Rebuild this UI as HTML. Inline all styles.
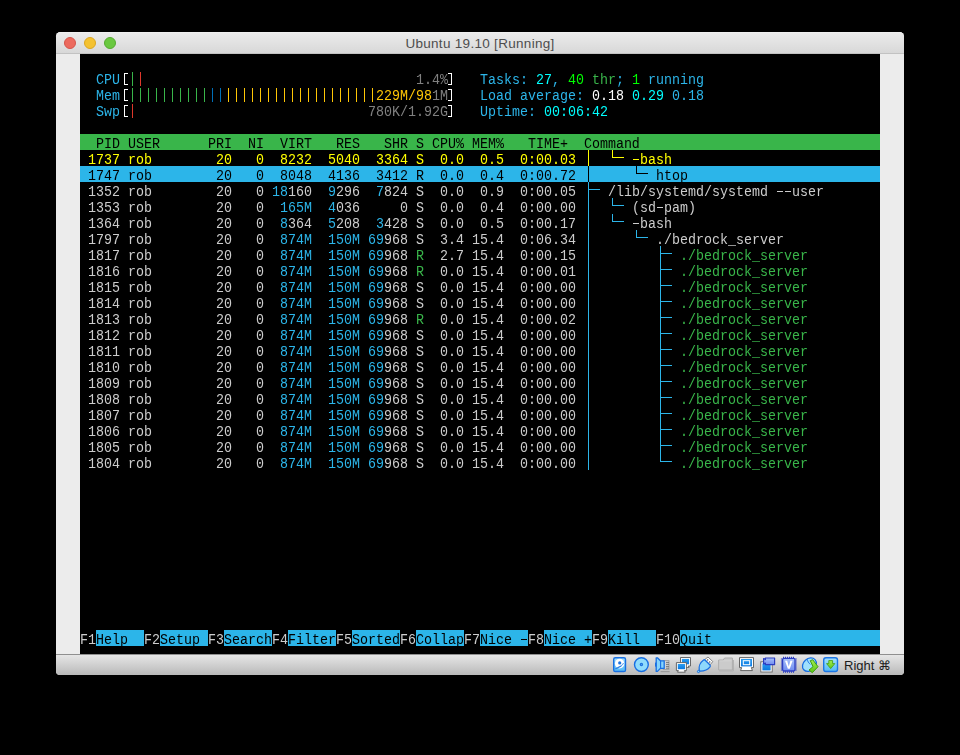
<!DOCTYPE html>
<html><head><meta charset="utf-8"><title>Ubuntu 19.10 [Running]</title>
<style>
html,body{margin:0;padding:0;background:#000;}
body{width:960px;height:755px;position:relative;overflow:hidden;font-family:"Liberation Sans",sans-serif;}
#win{position:absolute;left:56px;top:32px;width:848px;height:643px;border-radius:4.5px 4.5px 4px 4px;overflow:hidden;background:#ececec;}
#tb{position:absolute;left:0;top:0;width:848px;height:22px;background:linear-gradient(#f4f4f4 0,#ebebeb 1px,#d8d8d8 100%);border-bottom:1px solid #c2c2c2;box-sizing:border-box;}
#tb .ttl{position:absolute;left:0;width:848px;top:0.5px;line-height:22px;text-align:center;font-size:13.5px;letter-spacing:0.3px;color:#4d4d4d;}
.tl{position:absolute;top:5px;width:12px;height:12px;border-radius:50%;box-sizing:border-box;}
#sb{position:absolute;left:0;top:622px;width:848px;height:21px;background:linear-gradient(#e6e6e6,#b9b9b9);border-top:1px solid #8f8f8f;box-sizing:border-box;}
#sb .rt{position:absolute;left:788px;top:0;line-height:21px;font-size:13px;color:#1c1c1c;white-space:pre;}
#term{will-change:transform;position:absolute;left:24px;top:22px;width:800px;height:600px;background:#000;overflow:hidden;}
.r{position:absolute;left:0;width:800px;height:16px;}
.s{position:absolute;top:0;height:16px;line-height:16px;font-family:"Liberation Mono",monospace;font-size:13.333px;white-space:pre;transform-origin:0 0;transform:translateY(1.7px) scaleY(1.12);}
.b{position:absolute;top:0;height:16px;}
.ln{position:absolute;}
.ic{position:absolute;top:1px;}
.bk{position:absolute;top:3px;width:3px;height:10px;border:1px solid #fff;}
.hy{position:absolute;top:9px;width:6px;height:1px;}
.v{position:absolute;top:2px;width:1px;height:14px;}
</style></head><body>
<div id="win">
<div id="tb"><div class="tl" style="left:8px;background:#ec6a5e;border:1px solid #d5544a"></div><div class="tl" style="left:28px;background:#f4c231;border:1px solid #dba620"></div><div class="tl" style="left:48px;background:#6ac840;border:1px solid #55aa30"></div><div class="ttl">Ubuntu 19.10 [Running]</div></div>
<div id="term">
<div class="r" style="top:16px;"><span class="s" style="left:16px;color:#2cb5e9">CPU</span><i class="bk" style="left:44px;border-right:0"></i><i class="v" style="left:52px;background:#39b54a"></i><i class="v" style="left:60px;background:#de382b"></i><span class="s" style="left:328px;color:#808080"> 1.4%</span><i class="bk" style="left:368px;border-left:0"></i><span class="s" style="left:400px;color:#2cb5e9">Tasks: </span><span class="s" style="left:456px;color:#00ffff">27</span><span class="s" style="left:472px;color:#2cb5e9">, </span><span class="s" style="left:488px;color:#00ff00">40</span><span class="s" style="left:504px;color:#39b54a"> thr</span><span class="s" style="left:536px;color:#2cb5e9">; </span><span class="s" style="left:552px;color:#00ff00">1</span><span class="s" style="left:560px;color:#2cb5e9"> running</span></div>
<div class="r" style="top:32px;"><span class="s" style="left:16px;color:#2cb5e9">Mem</span><i class="bk" style="left:44px;border-right:0"></i><i class="v" style="left:52px;background:#39b54a"></i><i class="v" style="left:60px;background:#39b54a"></i><i class="v" style="left:68px;background:#39b54a"></i><i class="v" style="left:76px;background:#39b54a"></i><i class="v" style="left:84px;background:#39b54a"></i><i class="v" style="left:92px;background:#39b54a"></i><i class="v" style="left:100px;background:#39b54a"></i><i class="v" style="left:108px;background:#39b54a"></i><i class="v" style="left:116px;background:#39b54a"></i><i class="v" style="left:124px;background:#39b54a"></i><i class="v" style="left:132px;background:#006fb8"></i><i class="v" style="left:140px;background:#006fb8"></i><i class="v" style="left:148px;background:#ffc706"></i><i class="v" style="left:156px;background:#ffc706"></i><i class="v" style="left:164px;background:#ffc706"></i><i class="v" style="left:172px;background:#ffc706"></i><i class="v" style="left:180px;background:#ffc706"></i><i class="v" style="left:188px;background:#ffc706"></i><i class="v" style="left:196px;background:#ffc706"></i><i class="v" style="left:204px;background:#ffc706"></i><i class="v" style="left:212px;background:#ffc706"></i><i class="v" style="left:220px;background:#ffc706"></i><i class="v" style="left:228px;background:#ffc706"></i><i class="v" style="left:236px;background:#ffc706"></i><i class="v" style="left:244px;background:#ffc706"></i><i class="v" style="left:252px;background:#ffc706"></i><i class="v" style="left:260px;background:#ffc706"></i><i class="v" style="left:268px;background:#ffc706"></i><i class="v" style="left:276px;background:#ffc706"></i><i class="v" style="left:284px;background:#ffc706"></i><i class="v" style="left:292px;background:#ffc706"></i><span class="s" style="left:296px;color:#ffc706">229M/98</span><span class="s" style="left:352px;color:#808080">1M</span><i class="bk" style="left:368px;border-left:0"></i><span class="s" style="left:400px;color:#2cb5e9">Load average: </span><span class="s" style="left:512px;color:#ffffff">0.18</span><span class="s" style="left:552px;color:#00ffff">0.29</span><span class="s" style="left:592px;color:#2cb5e9">0.18</span></div>
<div class="r" style="top:48px;"><span class="s" style="left:16px;color:#2cb5e9">Swp</span><i class="bk" style="left:44px;border-right:0"></i><i class="v" style="left:52px;background:#de382b"></i><span class="s" style="left:288px;color:#808080">780K/1.92G</span><i class="bk" style="left:368px;border-left:0"></i><span class="s" style="left:400px;color:#2cb5e9">Uptime: </span><span class="s" style="left:464px;color:#00ffff">00:06:42</span></div>
<div class="r" style="top:80px;background:#39b54a;"><span class="s" style="left:0px;color:#000000">  PID USER      PRI  NI  VIRT   RES   SHR S CPU% MEM%   TIME+  Command</span></div>
<div class="r" style="top:96px;"><span class="s" style="left:0px;color:#ffff00"> 1737 rob        20   0</span><span class="s" style="left:200px;color:#ffff00">8232</span><span class="s" style="left:248px;color:#ffff00">5040</span><span class="s" style="left:296px;color:#ffff00">3364</span><span class="s" style="left:336px;color:#ffff00">S</span><span class="s" style="left:352px;color:#ffff00"> 0.0  0.5  0:00.03</span><i class="hy" style="left:553px;background:#ffff00"></i><span class="s" style="left:552px;color:#ffff00"> bash</span></div>
<div class="r" style="top:112px;background:#2cb5e9;"><span class="s" style="left:0px;color:#000000"> 1747 rob        20   0</span><span class="s" style="left:200px;color:#000000">8048</span><span class="s" style="left:248px;color:#000000">4136</span><span class="s" style="left:296px;color:#000000">3412</span><span class="s" style="left:336px;color:#000000">R</span><span class="s" style="left:352px;color:#000000"> 0.0  0.4  0:00.72</span><span class="s" style="left:576px;color:#000000">htop</span></div>
<div class="r" style="top:128px;"><span class="s" style="left:0px;color:#cccccc"> 1352 rob        20   0</span><span class="s" style="left:192px;color:#2cb5e9">18</span><span class="s" style="left:208px;color:#cccccc">160</span><span class="s" style="left:248px;color:#2cb5e9">9</span><span class="s" style="left:256px;color:#cccccc">296</span><span class="s" style="left:296px;color:#2cb5e9">7</span><span class="s" style="left:304px;color:#cccccc">824</span><span class="s" style="left:336px;color:#cccccc">S</span><span class="s" style="left:352px;color:#cccccc"> 0.0  0.9  0:00.05</span><i class="hy" style="left:697px;background:#cccccc"></i><i class="hy" style="left:705px;background:#cccccc"></i><span class="s" style="left:528px;color:#cccccc">/lib/systemd/systemd   user</span></div>
<div class="r" style="top:144px;"><span class="s" style="left:0px;color:#cccccc"> 1353 rob        20   0</span><span class="s" style="left:200px;color:#2cb5e9">165M</span><span class="s" style="left:248px;color:#2cb5e9">4</span><span class="s" style="left:256px;color:#cccccc">036</span><span class="s" style="left:320px;color:#cccccc">0</span><span class="s" style="left:336px;color:#cccccc">S</span><span class="s" style="left:352px;color:#cccccc"> 0.0  0.4  0:00.00</span><i class="hy" style="left:577px;background:#cccccc"></i><span class="s" style="left:552px;color:#cccccc">(sd pam)</span></div>
<div class="r" style="top:160px;"><span class="s" style="left:0px;color:#cccccc"> 1364 rob        20   0</span><span class="s" style="left:200px;color:#2cb5e9">8</span><span class="s" style="left:208px;color:#cccccc">364</span><span class="s" style="left:248px;color:#2cb5e9">5</span><span class="s" style="left:256px;color:#cccccc">208</span><span class="s" style="left:296px;color:#2cb5e9">3</span><span class="s" style="left:304px;color:#cccccc">428</span><span class="s" style="left:336px;color:#cccccc">S</span><span class="s" style="left:352px;color:#cccccc"> 0.0  0.5  0:00.17</span><i class="hy" style="left:553px;background:#cccccc"></i><span class="s" style="left:552px;color:#cccccc"> bash</span></div>
<div class="r" style="top:176px;"><span class="s" style="left:0px;color:#cccccc"> 1797 rob        20   0</span><span class="s" style="left:200px;color:#2cb5e9">874M</span><span class="s" style="left:248px;color:#2cb5e9">150M</span><span class="s" style="left:288px;color:#2cb5e9">69</span><span class="s" style="left:304px;color:#cccccc">968</span><span class="s" style="left:336px;color:#cccccc">S</span><span class="s" style="left:352px;color:#cccccc"> 3.4 15.4  0:06.34</span><span class="s" style="left:576px;color:#cccccc">./bedrock_server</span></div>
<div class="r" style="top:192px;"><span class="s" style="left:0px;color:#cccccc"> 1817 rob        20   0</span><span class="s" style="left:200px;color:#2cb5e9">874M</span><span class="s" style="left:248px;color:#2cb5e9">150M</span><span class="s" style="left:288px;color:#2cb5e9">69</span><span class="s" style="left:304px;color:#cccccc">968</span><span class="s" style="left:336px;color:#39b54a">R</span><span class="s" style="left:352px;color:#cccccc"> 2.7 15.4  0:00.15</span><span class="s" style="left:600px;color:#39b54a">./bedrock_server</span></div>
<div class="r" style="top:208px;"><span class="s" style="left:0px;color:#cccccc"> 1816 rob        20   0</span><span class="s" style="left:200px;color:#2cb5e9">874M</span><span class="s" style="left:248px;color:#2cb5e9">150M</span><span class="s" style="left:288px;color:#2cb5e9">69</span><span class="s" style="left:304px;color:#cccccc">968</span><span class="s" style="left:336px;color:#39b54a">R</span><span class="s" style="left:352px;color:#cccccc"> 0.0 15.4  0:00.01</span><span class="s" style="left:600px;color:#39b54a">./bedrock_server</span></div>
<div class="r" style="top:224px;"><span class="s" style="left:0px;color:#cccccc"> 1815 rob        20   0</span><span class="s" style="left:200px;color:#2cb5e9">874M</span><span class="s" style="left:248px;color:#2cb5e9">150M</span><span class="s" style="left:288px;color:#2cb5e9">69</span><span class="s" style="left:304px;color:#cccccc">968</span><span class="s" style="left:336px;color:#cccccc">S</span><span class="s" style="left:352px;color:#cccccc"> 0.0 15.4  0:00.00</span><span class="s" style="left:600px;color:#39b54a">./bedrock_server</span></div>
<div class="r" style="top:240px;"><span class="s" style="left:0px;color:#cccccc"> 1814 rob        20   0</span><span class="s" style="left:200px;color:#2cb5e9">874M</span><span class="s" style="left:248px;color:#2cb5e9">150M</span><span class="s" style="left:288px;color:#2cb5e9">69</span><span class="s" style="left:304px;color:#cccccc">968</span><span class="s" style="left:336px;color:#cccccc">S</span><span class="s" style="left:352px;color:#cccccc"> 0.0 15.4  0:00.00</span><span class="s" style="left:600px;color:#39b54a">./bedrock_server</span></div>
<div class="r" style="top:256px;"><span class="s" style="left:0px;color:#cccccc"> 1813 rob        20   0</span><span class="s" style="left:200px;color:#2cb5e9">874M</span><span class="s" style="left:248px;color:#2cb5e9">150M</span><span class="s" style="left:288px;color:#2cb5e9">69</span><span class="s" style="left:304px;color:#cccccc">968</span><span class="s" style="left:336px;color:#39b54a">R</span><span class="s" style="left:352px;color:#cccccc"> 0.0 15.4  0:00.02</span><span class="s" style="left:600px;color:#39b54a">./bedrock_server</span></div>
<div class="r" style="top:272px;"><span class="s" style="left:0px;color:#cccccc"> 1812 rob        20   0</span><span class="s" style="left:200px;color:#2cb5e9">874M</span><span class="s" style="left:248px;color:#2cb5e9">150M</span><span class="s" style="left:288px;color:#2cb5e9">69</span><span class="s" style="left:304px;color:#cccccc">968</span><span class="s" style="left:336px;color:#cccccc">S</span><span class="s" style="left:352px;color:#cccccc"> 0.0 15.4  0:00.00</span><span class="s" style="left:600px;color:#39b54a">./bedrock_server</span></div>
<div class="r" style="top:288px;"><span class="s" style="left:0px;color:#cccccc"> 1811 rob        20   0</span><span class="s" style="left:200px;color:#2cb5e9">874M</span><span class="s" style="left:248px;color:#2cb5e9">150M</span><span class="s" style="left:288px;color:#2cb5e9">69</span><span class="s" style="left:304px;color:#cccccc">968</span><span class="s" style="left:336px;color:#cccccc">S</span><span class="s" style="left:352px;color:#cccccc"> 0.0 15.4  0:00.00</span><span class="s" style="left:600px;color:#39b54a">./bedrock_server</span></div>
<div class="r" style="top:304px;"><span class="s" style="left:0px;color:#cccccc"> 1810 rob        20   0</span><span class="s" style="left:200px;color:#2cb5e9">874M</span><span class="s" style="left:248px;color:#2cb5e9">150M</span><span class="s" style="left:288px;color:#2cb5e9">69</span><span class="s" style="left:304px;color:#cccccc">968</span><span class="s" style="left:336px;color:#cccccc">S</span><span class="s" style="left:352px;color:#cccccc"> 0.0 15.4  0:00.00</span><span class="s" style="left:600px;color:#39b54a">./bedrock_server</span></div>
<div class="r" style="top:320px;"><span class="s" style="left:0px;color:#cccccc"> 1809 rob        20   0</span><span class="s" style="left:200px;color:#2cb5e9">874M</span><span class="s" style="left:248px;color:#2cb5e9">150M</span><span class="s" style="left:288px;color:#2cb5e9">69</span><span class="s" style="left:304px;color:#cccccc">968</span><span class="s" style="left:336px;color:#cccccc">S</span><span class="s" style="left:352px;color:#cccccc"> 0.0 15.4  0:00.00</span><span class="s" style="left:600px;color:#39b54a">./bedrock_server</span></div>
<div class="r" style="top:336px;"><span class="s" style="left:0px;color:#cccccc"> 1808 rob        20   0</span><span class="s" style="left:200px;color:#2cb5e9">874M</span><span class="s" style="left:248px;color:#2cb5e9">150M</span><span class="s" style="left:288px;color:#2cb5e9">69</span><span class="s" style="left:304px;color:#cccccc">968</span><span class="s" style="left:336px;color:#cccccc">S</span><span class="s" style="left:352px;color:#cccccc"> 0.0 15.4  0:00.00</span><span class="s" style="left:600px;color:#39b54a">./bedrock_server</span></div>
<div class="r" style="top:352px;"><span class="s" style="left:0px;color:#cccccc"> 1807 rob        20   0</span><span class="s" style="left:200px;color:#2cb5e9">874M</span><span class="s" style="left:248px;color:#2cb5e9">150M</span><span class="s" style="left:288px;color:#2cb5e9">69</span><span class="s" style="left:304px;color:#cccccc">968</span><span class="s" style="left:336px;color:#cccccc">S</span><span class="s" style="left:352px;color:#cccccc"> 0.0 15.4  0:00.00</span><span class="s" style="left:600px;color:#39b54a">./bedrock_server</span></div>
<div class="r" style="top:368px;"><span class="s" style="left:0px;color:#cccccc"> 1806 rob        20   0</span><span class="s" style="left:200px;color:#2cb5e9">874M</span><span class="s" style="left:248px;color:#2cb5e9">150M</span><span class="s" style="left:288px;color:#2cb5e9">69</span><span class="s" style="left:304px;color:#cccccc">968</span><span class="s" style="left:336px;color:#cccccc">S</span><span class="s" style="left:352px;color:#cccccc"> 0.0 15.4  0:00.00</span><span class="s" style="left:600px;color:#39b54a">./bedrock_server</span></div>
<div class="r" style="top:384px;"><span class="s" style="left:0px;color:#cccccc"> 1805 rob        20   0</span><span class="s" style="left:200px;color:#2cb5e9">874M</span><span class="s" style="left:248px;color:#2cb5e9">150M</span><span class="s" style="left:288px;color:#2cb5e9">69</span><span class="s" style="left:304px;color:#cccccc">968</span><span class="s" style="left:336px;color:#cccccc">S</span><span class="s" style="left:352px;color:#cccccc"> 0.0 15.4  0:00.00</span><span class="s" style="left:600px;color:#39b54a">./bedrock_server</span></div>
<div class="r" style="top:400px;"><span class="s" style="left:0px;color:#cccccc"> 1804 rob        20   0</span><span class="s" style="left:200px;color:#2cb5e9">874M</span><span class="s" style="left:248px;color:#2cb5e9">150M</span><span class="s" style="left:288px;color:#2cb5e9">69</span><span class="s" style="left:304px;color:#cccccc">968</span><span class="s" style="left:336px;color:#cccccc">S</span><span class="s" style="left:352px;color:#cccccc"> 0.0 15.4  0:00.00</span><span class="s" style="left:600px;color:#39b54a">./bedrock_server</span></div>
<div class="r" style="top:576px;"><div class="b" style="left:16px;width:48px;background:#2cb5e9"></div><div class="b" style="left:80px;width:48px;background:#2cb5e9"></div><div class="b" style="left:144px;width:48px;background:#2cb5e9"></div><div class="b" style="left:208px;width:48px;background:#2cb5e9"></div><div class="b" style="left:272px;width:48px;background:#2cb5e9"></div><div class="b" style="left:336px;width:48px;background:#2cb5e9"></div><div class="b" style="left:400px;width:48px;background:#2cb5e9"></div><div class="b" style="left:464px;width:48px;background:#2cb5e9"></div><div class="b" style="left:528px;width:48px;background:#2cb5e9"></div><div class="b" style="left:600px;width:200px;background:#2cb5e9"></div><span class="s" style="left:0px;color:#cccccc">F1</span><span class="s" style="left:16px;color:#000000">Help  </span><span class="s" style="left:64px;color:#cccccc">F2</span><span class="s" style="left:80px;color:#000000">Setup </span><span class="s" style="left:128px;color:#cccccc">F3</span><span class="s" style="left:144px;color:#000000">Search</span><span class="s" style="left:192px;color:#cccccc">F4</span><span class="s" style="left:208px;color:#000000">Filter</span><span class="s" style="left:256px;color:#cccccc">F5</span><span class="s" style="left:272px;color:#000000">Sorted</span><span class="s" style="left:320px;color:#cccccc">F6</span><span class="s" style="left:336px;color:#000000">Collap</span><span class="s" style="left:384px;color:#cccccc">F7</span><i class="hy" style="left:441px;background:#000000"></i><span class="s" style="left:400px;color:#000000">Nice  </span><span class="s" style="left:448px;color:#cccccc">F8</span><span class="s" style="left:464px;color:#000000">Nice +</span><span class="s" style="left:512px;color:#cccccc">F9</span><span class="s" style="left:528px;color:#000000">Kill  </span><span class="s" style="left:576px;color:#cccccc">F10</span><span class="s" style="left:600px;color:#000000">Quit</span></div>
<div class="ln" style="left:508px;top:96px;width:1px;height:16px;background:#ffff00"></div>
<div class="ln" style="left:532px;top:96px;width:1px;height:8px;background:#ffff00"></div><div class="ln" style="left:532px;top:103px;width:12px;height:1px;background:#ffff00"></div>
<div class="ln" style="left:508px;top:112px;width:1px;height:16px;background:#000000"></div>
<div class="ln" style="left:556px;top:112px;width:1px;height:8px;background:#000000"></div><div class="ln" style="left:556px;top:119px;width:12px;height:1px;background:#000000"></div>
<div class="ln" style="left:508px;top:128px;width:1px;height:16px;background:#2cb5e9"></div><div class="ln" style="left:508px;top:135px;width:12px;height:1px;background:#2cb5e9"></div>
<div class="ln" style="left:508px;top:144px;width:1px;height:16px;background:#2cb5e9"></div>
<div class="ln" style="left:532px;top:144px;width:1px;height:8px;background:#2cb5e9"></div><div class="ln" style="left:532px;top:151px;width:12px;height:1px;background:#2cb5e9"></div>
<div class="ln" style="left:508px;top:160px;width:1px;height:16px;background:#2cb5e9"></div>
<div class="ln" style="left:532px;top:160px;width:1px;height:8px;background:#2cb5e9"></div><div class="ln" style="left:532px;top:167px;width:12px;height:1px;background:#2cb5e9"></div>
<div class="ln" style="left:508px;top:176px;width:1px;height:16px;background:#2cb5e9"></div>
<div class="ln" style="left:556px;top:176px;width:1px;height:8px;background:#2cb5e9"></div><div class="ln" style="left:556px;top:183px;width:12px;height:1px;background:#2cb5e9"></div>
<div class="ln" style="left:508px;top:192px;width:1px;height:16px;background:#2cb5e9"></div>
<div class="ln" style="left:580px;top:192px;width:1px;height:16px;background:#2cb5e9"></div><div class="ln" style="left:580px;top:199px;width:12px;height:1px;background:#2cb5e9"></div>
<div class="ln" style="left:508px;top:208px;width:1px;height:16px;background:#2cb5e9"></div>
<div class="ln" style="left:580px;top:208px;width:1px;height:16px;background:#2cb5e9"></div><div class="ln" style="left:580px;top:215px;width:12px;height:1px;background:#2cb5e9"></div>
<div class="ln" style="left:508px;top:224px;width:1px;height:16px;background:#2cb5e9"></div>
<div class="ln" style="left:580px;top:224px;width:1px;height:16px;background:#2cb5e9"></div><div class="ln" style="left:580px;top:231px;width:12px;height:1px;background:#2cb5e9"></div>
<div class="ln" style="left:508px;top:240px;width:1px;height:16px;background:#2cb5e9"></div>
<div class="ln" style="left:580px;top:240px;width:1px;height:16px;background:#2cb5e9"></div><div class="ln" style="left:580px;top:247px;width:12px;height:1px;background:#2cb5e9"></div>
<div class="ln" style="left:508px;top:256px;width:1px;height:16px;background:#2cb5e9"></div>
<div class="ln" style="left:580px;top:256px;width:1px;height:16px;background:#2cb5e9"></div><div class="ln" style="left:580px;top:263px;width:12px;height:1px;background:#2cb5e9"></div>
<div class="ln" style="left:508px;top:272px;width:1px;height:16px;background:#2cb5e9"></div>
<div class="ln" style="left:580px;top:272px;width:1px;height:16px;background:#2cb5e9"></div><div class="ln" style="left:580px;top:279px;width:12px;height:1px;background:#2cb5e9"></div>
<div class="ln" style="left:508px;top:288px;width:1px;height:16px;background:#2cb5e9"></div>
<div class="ln" style="left:580px;top:288px;width:1px;height:16px;background:#2cb5e9"></div><div class="ln" style="left:580px;top:295px;width:12px;height:1px;background:#2cb5e9"></div>
<div class="ln" style="left:508px;top:304px;width:1px;height:16px;background:#2cb5e9"></div>
<div class="ln" style="left:580px;top:304px;width:1px;height:16px;background:#2cb5e9"></div><div class="ln" style="left:580px;top:311px;width:12px;height:1px;background:#2cb5e9"></div>
<div class="ln" style="left:508px;top:320px;width:1px;height:16px;background:#2cb5e9"></div>
<div class="ln" style="left:580px;top:320px;width:1px;height:16px;background:#2cb5e9"></div><div class="ln" style="left:580px;top:327px;width:12px;height:1px;background:#2cb5e9"></div>
<div class="ln" style="left:508px;top:336px;width:1px;height:16px;background:#2cb5e9"></div>
<div class="ln" style="left:580px;top:336px;width:1px;height:16px;background:#2cb5e9"></div><div class="ln" style="left:580px;top:343px;width:12px;height:1px;background:#2cb5e9"></div>
<div class="ln" style="left:508px;top:352px;width:1px;height:16px;background:#2cb5e9"></div>
<div class="ln" style="left:580px;top:352px;width:1px;height:16px;background:#2cb5e9"></div><div class="ln" style="left:580px;top:359px;width:12px;height:1px;background:#2cb5e9"></div>
<div class="ln" style="left:508px;top:368px;width:1px;height:16px;background:#2cb5e9"></div>
<div class="ln" style="left:580px;top:368px;width:1px;height:16px;background:#2cb5e9"></div><div class="ln" style="left:580px;top:375px;width:12px;height:1px;background:#2cb5e9"></div>
<div class="ln" style="left:508px;top:384px;width:1px;height:16px;background:#2cb5e9"></div>
<div class="ln" style="left:580px;top:384px;width:1px;height:16px;background:#2cb5e9"></div><div class="ln" style="left:580px;top:391px;width:12px;height:1px;background:#2cb5e9"></div>
<div class="ln" style="left:508px;top:400px;width:1px;height:16px;background:#2cb5e9"></div>
<div class="ln" style="left:580px;top:400px;width:1px;height:8px;background:#2cb5e9"></div><div class="ln" style="left:580px;top:407px;width:12px;height:1px;background:#2cb5e9"></div>
</div>
<div id="sb"><svg class="ic" style="left:556px" width="16" height="18" viewBox="0 0 16 18"><defs><linearGradient id="gb" x1="0" y1="0" x2="0" y2="1"><stop offset="0" stop-color="#a6e2fd"/><stop offset="1" stop-color="#52b9f5"/></linearGradient><linearGradient id="gs" x1="0" y1="0" x2="0" y2="1"><stop offset="0" stop-color="#2a9cf0"/><stop offset="1" stop-color="#0b78e0"/></linearGradient><linearGradient id="gp" x1="0" y1="0" x2="0" y2="1"><stop offset="0" stop-color="#a9c2fb"/><stop offset="1" stop-color="#6f8cf0"/></linearGradient><linearGradient id="gg" x1="0" y1="0" x2="0" y2="1"><stop offset="0" stop-color="#a4ee52"/><stop offset="1" stop-color="#5cc616"/></linearGradient></defs>
<rect x="1.7" y="1.7" width="11.8" height="13.8" rx="1.6" fill="url(#gb)" stroke="#186fe2" stroke-width="1.4"/><ellipse cx="7.6" cy="7.6" rx="4.7" ry="4.9" fill="#ffffff"/><circle cx="7.7" cy="6.9" r="1.6" fill="#1e74e0"/><path d="M3 12.4 L8.6 9.4 L9.6 10.4 L3.6 13.6 Z" fill="#2a80e6"/><path d="M9 9.6 C10.4 9.2 11.2 8.2 11.4 7" fill="none" stroke="#2a80e6" stroke-width="0.9"/></svg>
<svg class="ic" style="left:577px" width="17" height="18" viewBox="0 0 17 18"><circle cx="8.4" cy="8.6" r="6.9" fill="#8fdcfc" stroke="#186fe2" stroke-width="1.4"/><circle cx="8.4" cy="8.6" r="1.1" fill="#8fdcfc" stroke="#1e74e0" stroke-width="1.3"/></svg>
<svg class="ic" style="left:598px" width="18" height="18" viewBox="0 0 18 18"><rect x="9.2" y="4.6" width="5.8" height="8.8" fill="#d4d4d4" stroke="#9a9a9a" stroke-width="0.8"/><path d="M12 6.4h3M12 8.4h3M12 10.4h3M12 12.2h3" stroke="#6e6e6e" stroke-width="0.9"/><path d="M6.6 15.6h9" stroke="#9c9c9c" stroke-width="1.2"/><path d="M2.2 1.8 L3.4 1.8 L6.4 4.8 L10.2 4.8 L10.2 12.4 L6.4 12.4 L3.4 15.4 L2.2 15.4 Z" fill="#86d4fb" stroke="#186fe2" stroke-width="1.3" stroke-linejoin="round"/><path d="M6.6 4.8V12.4" stroke="#186fe2" stroke-width="1.1"/><rect x="1" y="6.6" width="1.4" height="4" fill="#186fe2"/></svg>
<svg class="ic" style="left:619px" width="18" height="18" viewBox="0 0 18 18"><path d="M5.5 1.5h10v8.5h-2.2l0.8 1.4h-7.2l0.8-1.4h-2.2z" fill="#ffffff" stroke="#5a5a5a" stroke-width="0.9" stroke-linejoin="round"/><rect x="6.9" y="2.9" width="7.2" height="5.4" fill="url(#gs)"/><path d="M1.4 6.6h10v8h-2l0.9 1.6h-7.8l0.9-1.6h-2z" fill="#ffffff" stroke="#5a5a5a" stroke-width="0.9" stroke-linejoin="round"/><rect x="2.8" y="8" width="7.2" height="5.2" fill="url(#gs)"/></svg>
<svg class="ic" style="left:640px" width="18" height="18" viewBox="0 0 18 18"><path d="M8.8 3.5 L12 1 L16.8 5.6 L14 8.8 Z" fill="#ffffff" stroke="#7a7a7a" stroke-width="0.9" stroke-linejoin="round"/><circle cx="11.7" cy="3.9" r="0.65" fill="#333"/><circle cx="13.8" cy="6" r="0.65" fill="#333"/><path d="M7.6 4 C8.2 3.6 8.8 3.8 9.2 4.2 L14 9 C14.4 9.6 14.4 10.2 14 10.8 C12 13.4 8 15 4.2 15.2 L3.2 14.2 C2.6 10.6 4.4 6.2 7.6 4 Z" fill="#8ed8fb" stroke="#186fe2" stroke-width="1.3" stroke-linejoin="round"/><circle cx="2.5" cy="15.5" r="1.1" fill="#8ed8fb" stroke="#186fe2" stroke-width="1"/></svg>
<svg class="ic" style="left:661px" width="18" height="18" viewBox="0 0 18 18"><path d="M2.2 15 H16.4 V4" fill="none" stroke="#b0b0b0" stroke-width="1"/><path d="M1.6 4 H6.2 L7.6 2 H15.4 V14 H1.6 Z" fill="#cbcbcb" stroke="#adadad" stroke-width="1" stroke-linejoin="round"/><path d="M2.4 4.9h12.2" stroke="#d8d8d8" stroke-width="0.8"/></svg>
<svg class="ic" style="left:682px" width="18" height="18" viewBox="0 0 18 18"><path d="M1.5 1.6 H15.5 V11.6 H13.4 L14.4 14.6 H2.6 L3.6 11.6 H1.5 Z" fill="#ffffff" stroke="#555555" stroke-width="0.9" stroke-linejoin="round"/><rect x="3" y="3" width="11" height="7.4" fill="url(#gs)"/><rect x="5.3" y="4.7" width="6.4" height="4" fill="none" stroke="#ffffff" stroke-width="1"/></svg>
<svg class="ic" style="left:703px" width="18" height="18" viewBox="0 0 18 18"><rect x="1.8" y="5.8" width="11.4" height="10.2" fill="#ffffff" stroke="#666666" stroke-width="0.9"/><rect x="3.4" y="7.4" width="8.2" height="7" fill="url(#gs)"/><path d="M4.6 2.6 L6.4 3.6 V2 H15.6 V8.6 H6.4 V7 L4.6 8 Z" fill="url(#gp)" stroke="#2c3ec2" stroke-width="1.2" stroke-linejoin="round"/></svg>
<svg class="ic" style="left:724px" width="18" height="18" viewBox="0 0 18 18"><path d="M3 1.4H15M3 16H15" stroke="#2c3ec2" stroke-width="1.4" stroke-dasharray="1 1"/><path d="M1.6 2.6V15M16 2.6V15" stroke="#2c3ec2" stroke-width="1.4" stroke-dasharray="1 1"/><rect x="2.6" y="2.4" width="12.4" height="12.6" rx="1.4" fill="url(#gp)" stroke="#2c3ec2" stroke-width="1.3"/><path d="M5 4.8 H7.2 L8.8 10.4 L10.4 4.8 H12.6 L9.8 12.8 H7.8 Z" fill="#ffffff"/></svg>
<svg class="ic" style="left:745px" width="18" height="18" viewBox="0 0 18 18"><ellipse cx="8.4" cy="8.7" rx="7.6" ry="6" transform="rotate(-42 8.4 8.7)" fill="#9fe0fc" stroke="#186fe2" stroke-width="1.3"/><path d="M6.2 3.2 C6.6 5.4 7.6 7 9.4 8.4" fill="none" stroke="#186fe2" stroke-width="0.9"/><path d="M9.3 4.7 L11.7 3.7 L17 10.7 L11.3 16.7 L8 14 L12 10.7 Z" fill="url(#gg)" stroke="#3e9c12" stroke-width="1" stroke-linejoin="round"/></svg>
<svg class="ic" style="left:766px" width="18" height="18" viewBox="0 0 18 18"><rect x="1.7" y="1.7" width="13.8" height="13.8" rx="2.2" fill="url(#gb)" stroke="#1c76e6" stroke-width="1.4"/><path d="M6.8 4.6 H10.6 V7.6 H12.8 L8.7 12.6 L4.6 7.6 H6.8 Z" fill="url(#gg)" stroke="#4aa21a" stroke-width="0.9" stroke-linejoin="round"/></svg>
<div class="rt">Right ⌘</div></div>
</div></body></html>
